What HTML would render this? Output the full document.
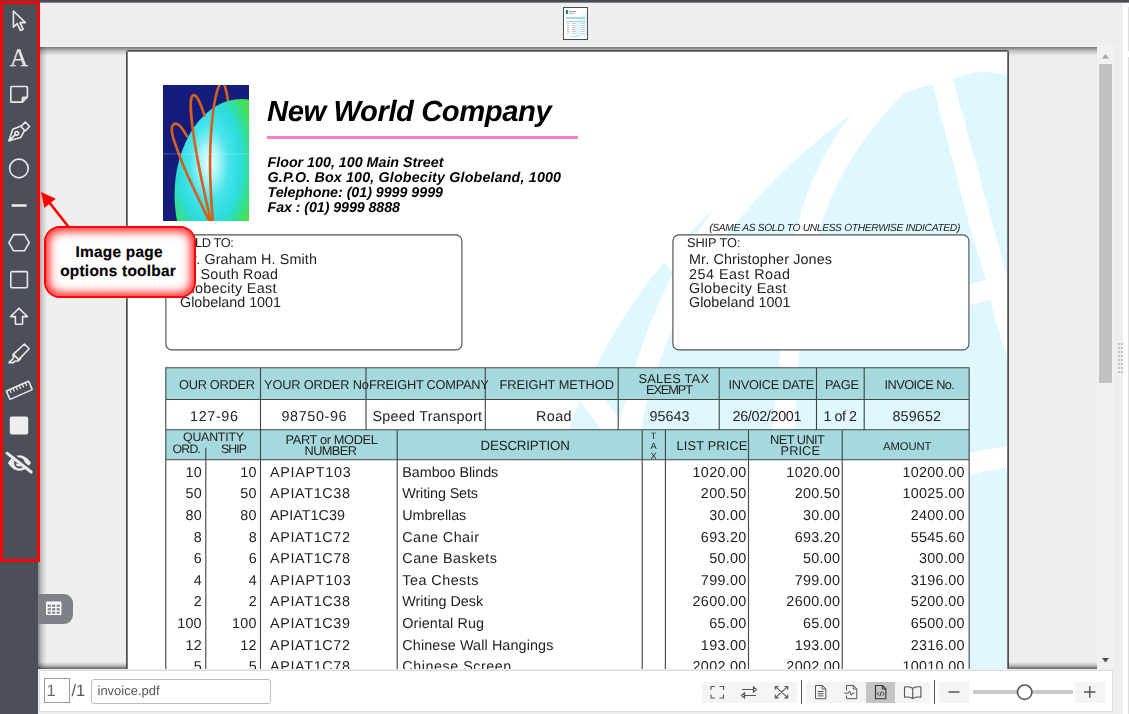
<!DOCTYPE html>
<html lang="en">
<head>
<meta charset="utf-8">
<title>Image page options toolbar</title>
<style>
html,body{margin:0;padding:0}
body{text-rendering:geometricPrecision;width:1129px;height:714px;overflow:hidden;position:relative;background:#eeeeee;font-family:"Liberation Sans",Arial,sans-serif}
.abs,.r,.t{position:absolute}
.t{white-space:nowrap}
#topstrip{left:0;top:0;width:1129px;height:3px;background:linear-gradient(#454a51 0,#4a4f57 60%,#a9abae 100%)}
#sidebar{left:0;top:0;width:38px;height:714px;background:#4b5058}
#redbox{left:0;top:1px;width:34px;height:555px;border:3px solid #ff0000}
#viewer{will-change:transform;left:38px;top:47px;width:1059px;height:622px;background:#eeeeee;overflow:hidden}
#pgsheet{left:88px;top:3px;width:881px;height:700px;border:1px solid #505050;border-radius:1.5px;box-shadow:inset 0 0 0 1px #7c7c7c;background:#fff}
#shTop{left:0;top:0;width:100%;height:9px;background:linear-gradient(rgba(0,0,0,.50),rgba(0,0,0,.18) 45%,rgba(0,0,0,0))}
#shLeft{left:0;top:0;width:9px;height:100%;background:linear-gradient(90deg,rgba(0,0,0,.42),rgba(0,0,0,.15) 45%,rgba(0,0,0,0))}
#shBot{left:0;bottom:0;width:100%;height:7px;background:linear-gradient(0deg,rgba(0,0,0,.60),rgba(0,0,0,.2) 50%,rgba(0,0,0,0))}
#vscroll{left:1097px;top:47px;width:17px;height:622px;background:#f1f1f1}
#vthumb{left:2px;top:17px;width:13px;height:319px;background:#c1c1c1}
#rwhite{left:1123px;top:3px;width:6px;height:711px;background:#fff}
#bbar{left:39px;top:670px;width:1072px;height:40px;background:#fff;border:1px solid #dcdcdc}
#tab{left:38px;top:594px;width:35px;height:30px;background:#7d8288;border-radius:0 9px 9px 0}
.ui{font-family:"Liberation Sans",Arial,sans-serif;color:#666}
</style>
</head>
<body>
<div id="viewer" class="abs">
<div id="shTop" class="abs"></div><div id="shLeft" class="abs"></div><div id="shBot" class="abs"></div>
<div id="pgsheet" class="abs"></div>
<div class="abs" style="left:-38px;top:-47px;width:1129px;height:714px"><svg class="abs" style="left:0;top:0" width="1129" height="714" viewBox="0 0 1129 714"><defs><clipPath id="pgclip"><rect x="128" y="52" width="879" height="640"/></clipPath></defs><g clip-path="url(#pgclip)"><path d="M541.2 700.0 C540.6 695.0 538.6 680.0 537.7 670.0 C536.8 660.0 536.2 650.0 535.9 640.0 C535.5 630.0 535.4 620.0 535.6 610.0 C535.8 600.0 536.2 590.0 536.9 580.0 C537.6 570.0 538.6 560.0 539.9 550.0 C541.1 540.0 542.7 530.0 544.5 520.0 C546.3 510.0 548.3 500.0 550.7 490.0 C553.1 480.0 555.8 470.0 558.7 460.0 C561.7 450.0 565.0 440.0 568.6 430.0 C572.2 420.0 576.0 410.0 580.3 400.0 C584.6 390.0 589.1 380.0 594.1 370.0 C599.1 360.0 604.4 350.0 610.1 340.0 C615.9 330.0 622.0 320.0 628.6 310.0 C635.3 300.0 642.3 290.0 649.9 280.0 C657.5 270.0 665.5 260.0 674.3 250.0 C683.1 240.0 692.3 230.0 702.5 220.0 C712.7 210.0 723.4 200.0 735.4 190.0 C747.3 180.0 759.9 170.0 774.3 160.0 C788.7 150.0 808.6 137.7 821.8 130.0 C834.9 122.3 839.0 120.2 853.0 114.0 C867.0 107.8 892.7 97.6 906.0 92.6 C919.3 87.6 925.2 86.3 933.0 84.0 C940.8 81.7 945.8 80.4 953.0 78.5 C960.2 76.6 969.5 73.6 976.0 72.6 C982.5 71.6 986.0 71.8 992.0 72.5 C998.0 73.2 1008.7 76.2 1012.0 77.0 L1012 720 L540 720 Z" fill="#dff7fe"/><g fill="#fff"><path d="M853.9 112.0 C849.6 115.3 836.3 125.3 828.1 132.0 C819.8 138.7 811.9 145.3 804.4 152.0 C796.8 158.7 789.6 165.3 782.7 172.0 C775.9 178.7 769.3 185.3 763.0 192.0 C756.8 198.7 750.8 205.3 745.2 212.0 C739.5 218.7 734.1 225.3 729.0 232.0 C723.9 238.7 719.1 245.3 714.5 252.0 C709.9 258.7 705.6 265.3 701.5 272.0 C697.4 278.7 693.6 285.3 690.0 292.0 C686.3 298.7 682.9 305.3 679.7 312.0 C676.5 318.7 673.5 325.3 670.7 332.0 C667.8 338.7 665.2 345.3 662.7 352.0 C660.3 358.7 658.0 365.3 655.8 372.0 C653.7 378.7 651.7 385.3 649.8 392.0 C647.9 398.7 646.2 405.3 644.6 412.0 C643.0 418.7 641.1 427.3 640.1 432.0 C639.0 436.7 638.7 438.7 638.4 440.0 L615.5 440.0 C615.5 439.9 614.7 443.1 615.6 439.7 C616.4 436.3 618.8 426.4 620.5 419.7 C622.2 413.0 623.9 406.4 625.7 399.7 C627.5 393.0 629.4 386.4 631.3 379.7 C633.3 373.0 635.3 366.4 637.5 359.7 C639.6 353.0 641.9 346.4 644.3 339.7 C646.6 333.0 649.1 326.4 651.8 319.7 C654.5 313.0 657.3 306.4 660.3 299.7 C663.3 293.0 666.5 286.4 669.9 279.7 C673.3 273.0 676.9 266.4 680.7 259.7 C684.5 253.0 688.5 246.4 692.7 239.7 C697.0 233.0 701.5 226.4 706.3 219.7 C711.1 213.0 718.9 203.0 721.4 199.7 L780 120 Z"/><path d="M852.9 112.0 C850.5 115.3 843.0 125.3 838.6 132.0 C834.2 138.7 830.2 145.3 826.4 152.0 C822.7 158.7 819.4 165.3 816.3 172.0 C813.2 178.7 810.4 185.3 807.9 192.0 C805.4 198.7 803.1 205.3 801.1 212.0 C799.0 218.7 797.3 225.3 795.6 232.0 C794.0 238.7 792.6 245.3 791.3 252.0 C790.0 258.7 789.0 265.3 788.0 272.0 C787.0 278.7 786.1 285.3 785.4 292.0 C784.6 298.7 783.9 305.3 783.3 312.0 C782.7 318.7 782.2 325.3 781.6 332.0 C781.1 338.7 780.6 345.3 780.0 352.0 C779.5 358.7 779.0 365.3 778.4 372.0 C777.8 378.7 777.2 385.3 776.5 392.0 C775.8 398.7 775.1 405.3 774.2 412.0 C773.3 418.7 771.9 427.3 771.2 432.0 C770.4 436.7 770.0 438.7 769.7 440.0 L793.6 440.0 C793.7 438.7 793.9 436.7 794.3 432.0 C794.7 427.3 795.3 418.7 795.8 412.0 C796.2 405.3 796.6 398.7 797.0 392.0 C797.4 385.3 797.7 378.7 798.1 372.0 C798.5 365.3 798.9 358.7 799.3 352.0 C799.8 345.3 800.2 338.7 800.8 332.0 C801.4 325.3 802.0 318.7 802.8 312.0 C803.5 305.3 804.3 298.7 805.3 292.0 C806.3 285.3 807.4 278.7 808.7 272.0 C810.0 265.3 811.4 258.7 813.0 252.0 C814.7 245.3 816.5 238.7 818.6 232.0 C820.6 225.3 822.9 218.7 825.4 212.0 C828.0 205.3 830.8 198.7 833.8 192.0 C836.9 185.3 840.3 178.7 844.0 172.0 C847.6 165.3 851.6 158.7 855.9 152.0 C860.3 145.3 864.9 138.7 870.0 132.0 C875.1 125.3 880.5 118.7 886.3 112.0 C892.2 105.3 901.9 95.3 905.0 92.0 L880 90 Z"/><path d="M930.5 76.0 C930.9 77.4 929.0 70.2 932.8 84.5 C936.5 98.8 946.3 136.4 953.0 162.0 C959.7 187.6 967.5 218.3 973.0 238.0 C978.5 257.7 982.3 267.1 986.0 280.4 C989.7 293.7 991.5 305.5 995.0 318.0 C998.5 330.5 1001.2 338.5 1007.0 355.5 C1012.8 372.5 1026.2 409.2 1030.0 420.0 L1030 340 C1026.2 329.2 1012.5 291.7 1007.0 275.0 C1001.5 258.3 1002.3 259.2 997.0 240.0 C991.7 220.8 982.3 186.8 975.0 160.0 C967.7 133.2 957.0 93.8 953.0 79.0 C949.0 64.2 951.3 72.3 951.0 71.0 Z"/></g><g fill="none" stroke="#fff"><path d="M659.0 240.0 C662.0 243.7 669.2 252.7 677.0 262.0 C684.8 271.3 692.2 285.3 706.0 296.0 C719.8 306.7 737.7 319.7 760.0 326.0 C782.3 332.3 813.3 336.0 840.0 334.0 C866.7 332.0 898.3 320.6 920.0 314.0 C941.7 307.4 956.7 298.8 970.0 294.5 C983.3 290.2 991.7 289.9 1000.0 288.0 C1008.3 286.1 1016.7 283.8 1020.0 283.0" stroke-width="20"/><path d="M577.0 380.0 C580.3 384.3 589.8 397.0 597.0 406.0 C604.2 415.0 606.2 421.7 620.0 434.0 C633.8 446.3 653.3 468.2 680.0 480.0 C706.7 491.8 746.7 503.0 780.0 505.0 C813.3 507.0 848.3 498.8 880.0 492.0 C911.7 485.2 948.8 469.8 970.0 464.0 C991.2 458.2 997.8 458.8 1007.0 457.0 C1016.2 455.2 1022.0 453.7 1025.0 453.0" stroke-width="21"/></g></g></svg>
<svg class="abs" style="left:163px;top:85.4px" width="86.4" height="136" viewBox="0 0 86 136" preserveAspectRatio="none"><defs><radialGradient id="lg" gradientUnits="userSpaceOnUse" cx="46" cy="78" r="46" gradientTransform="translate(46 78) scale(1 1.9) translate(-46 -78)"><stop offset="0" stop-color="#ecffff"/><stop offset="0.2" stop-color="#a8f4f8"/><stop offset="0.42" stop-color="#48e4ec"/><stop offset="0.68" stop-color="#2cdcdc"/><stop offset="0.86" stop-color="#30e098"/><stop offset="1" stop-color="#44e054"/></radialGradient><filter id="lb" x="-5%" y="-5%" width="110%" height="110%"><feGaussianBlur stdDeviation="0.45"/></filter><clipPath id="lc"><rect x="0" y="0" width="86" height="136"/></clipPath></defs>
<g clip-path="url(#lc)"><rect width="86" height="136" fill="#151c7c"/><g filter="url(#lb)"><ellipse cx="78" cy="110" rx="66.5" ry="96" fill="url(#lg)"/>
<g fill="none" stroke="#d5611d" stroke-width="2.6" stroke-linecap="round"><path d="M46 136 C38 118 24 92 17 72 C11 56 7 46 9.4 41 C11.5 36.6 15.5 39 18.4 42.6 C20.6 45.4 22.4 48.6 24 51.4"/><path d="M47.6 136 C42 112 34 76 30.4 50 C28 32 25.6 14 29.6 10.6 C33 8 37 17.5 41.4 30.6"/><path d="M49.6 136 C47.6 112 45.6 80 47.6 52 C49 30 52 8 56.6 -1 M61 -1 C62.6 4 63.6 9 64.6 15"/></g>
<path d="M0 68.9 H86" stroke="#cfe" stroke-opacity=".55" stroke-width="0.5"/></g></g></svg>

<div class="t" style="left:267.00px;top:95px;font-size:29.21px;line-height:34px;font-weight:bold;font-style:italic;color:#000;letter-spacing:-0.427px;">New World Company</div>
<div class="r" style="left:267px;top:136px;width:311px;height:3px;background:#ff80c0"></div>
<div class="t" style="left:267.50px;top:155px;font-size:14.25px;line-height:17px;font-weight:bold;font-style:italic;color:#000;letter-spacing:0.006px;">Floor 100, 100 Main Street</div>
<div class="t" style="left:267.50px;top:170px;font-size:14.25px;line-height:17px;font-weight:bold;font-style:italic;color:#000;letter-spacing:0.177px;">G.P.O. Box 100, Globecity Globeland, 1000</div>
<div class="t" style="left:267.50px;top:185px;font-size:14.25px;line-height:17px;font-weight:bold;font-style:italic;color:#000;letter-spacing:-0.026px;">Telephone: (01) 9999 9999</div>
<div class="t" style="left:267.50px;top:200px;font-size:14.25px;line-height:17px;font-weight:bold;font-style:italic;color:#000;letter-spacing:-0.073px;">Fax : (01) 9999 8888</div>
<div class="t" style="left:709.30px;top:222px;font-size:10.25px;line-height:13px;font-weight:normal;font-style:italic;color:#222;letter-spacing:-0.339px;">(SAME AS SOLD TO UNLESS OTHERWISE INDICATED)</div>
<svg class="abs" style="left:0;top:0" width="1129" height="714" viewBox="0 0 1129 714"><rect x="165.9" y="234.9" width="296" height="115" rx="6" fill="#fff" stroke="#4d5353" stroke-width="1.15"/><rect x="672.9" y="234.9" width="296" height="115" rx="6" fill="#fff" stroke="#4d5353" stroke-width="1.15"/><rect x="165.8" y="367.8" width="803.3499999999999" height="31.69999999999999" fill="#a6d9dd"/><rect x="165.8" y="429.8" width="803.3499999999999" height="30.0" fill="#a6d9dd"/><rect x="165.8" y="459.8" width="803.3499999999999" height="215" fill="#fff"/><path d="M165.20000000000002 367.8 H969.75 M165.20000000000002 399.5 H969.75 M165.20000000000002 429.8 H969.75 M165.20000000000002 459.8 H969.75 M165.8 367.8 V429.8 M260.5 367.8 V429.8 M366.0 367.8 V429.8 M485.3 367.8 V429.8 M618.2 367.8 V429.8 M719.2 367.8 V429.8 M816.5 367.8 V429.8 M864.2 367.8 V429.8 M969.15 367.8 V429.8 M165.8 429.8 V680 M260.5 429.8 V680 M397.2 429.8 V680 M642.2 429.8 V680 M665.4 429.8 V680 M748.5 429.8 V680 M842.2 429.8 V680 M969.15 429.8 V680 M205.8 447.8 V680" fill="none" stroke="#414747" stroke-width="1.12"/></svg>
<div class="t" style="left:177.30px;top:235px;font-size:12.81px;line-height:16px;font-weight:normal;font-style:normal;color:#222;letter-spacing:-0.401px;">SOLD TO:</div>
<div class="t" style="left:180.00px;top:251px;font-size:14.35px;line-height:18px;font-weight:normal;font-style:normal;color:#222;letter-spacing:0.125px;">Mr. Graham H. Smith</div>
<div class="t" style="left:180.00px;top:266px;font-size:14.35px;line-height:18px;font-weight:normal;font-style:normal;color:#222;letter-spacing:0.190px;">10 South Road</div>
<div class="t" style="left:180.00px;top:280px;font-size:14.35px;line-height:18px;font-weight:normal;font-style:normal;color:#222;letter-spacing:0.309px;">Globecity East</div>
<div class="t" style="left:180.00px;top:294px;font-size:14.35px;line-height:18px;font-weight:normal;font-style:normal;color:#222;letter-spacing:-0.024px;">Globeland 1001</div>
<div class="t" style="left:687.00px;top:235px;font-size:12.81px;line-height:16px;font-weight:normal;font-style:normal;color:#222;letter-spacing:-0.089px;">SHIP TO:</div>
<div class="t" style="left:689.00px;top:251px;font-size:14.35px;line-height:18px;font-weight:normal;font-style:normal;color:#222;letter-spacing:0.133px;">Mr. Christopher Jones</div>
<div class="t" style="left:689.00px;top:266px;font-size:14.35px;line-height:18px;font-weight:normal;font-style:normal;color:#222;letter-spacing:0.506px;">254 East Road</div>
<div class="t" style="left:689.00px;top:280px;font-size:14.35px;line-height:18px;font-weight:normal;font-style:normal;color:#222;letter-spacing:0.386px;">Globecity East</div>
<div class="t" style="left:689.00px;top:294px;font-size:14.35px;line-height:18px;font-weight:normal;font-style:normal;color:#222;letter-spacing:0.015px;">Globeland 1001</div>
<div class="t" style="left:179.00px;top:377px;font-size:12.81px;line-height:16px;font-weight:normal;font-style:normal;color:#222;letter-spacing:-0.284px;">OUR ORDER</div>
<div class="t" style="left:264.00px;top:377px;font-size:12.81px;line-height:16px;font-weight:normal;font-style:normal;color:#222;letter-spacing:-0.148px;">YOUR ORDER No</div>
<div class="t" style="left:369.00px;top:377px;font-size:12.81px;line-height:16px;font-weight:normal;font-style:normal;color:#222;letter-spacing:-0.240px;">FREIGHT COMPANY</div>
<div class="t" style="left:499.50px;top:377px;font-size:12.81px;line-height:16px;font-weight:normal;font-style:normal;color:#222;letter-spacing:-0.041px;">FREIGHT METHOD</div>
<div class="t" style="left:638.50px;top:371px;font-size:12.81px;line-height:16px;font-weight:normal;font-style:normal;color:#222;letter-spacing:0.238px;">SALES TAX</div>
<div class="t" style="left:646.00px;top:382px;font-size:12.81px;line-height:16px;font-weight:normal;font-style:normal;color:#222;letter-spacing:-1.130px;">EXEMPT</div>
<div class="t" style="left:728.50px;top:377px;font-size:12.81px;line-height:16px;font-weight:normal;font-style:normal;color:#222;letter-spacing:-0.316px;">INVOICE DATE</div>
<div class="t" style="left:825.00px;top:377px;font-size:12.81px;line-height:16px;font-weight:normal;font-style:normal;color:#222;letter-spacing:-0.217px;">PAGE</div>
<div class="t" style="left:884.50px;top:377px;font-size:12.81px;line-height:16px;font-weight:normal;font-style:normal;color:#222;letter-spacing:-0.566px;">INVOICE No.</div>
<div class="t" style="left:190.00px;top:408px;font-size:14.35px;line-height:18px;font-weight:normal;font-style:normal;color:#222;letter-spacing:0.660px;">127-96</div>
<div class="t" style="left:281.50px;top:408px;font-size:14.35px;line-height:18px;font-weight:normal;font-style:normal;color:#222;letter-spacing:0.624px;">98750-96</div>
<div class="t" style="left:372.50px;top:408px;font-size:14.35px;line-height:18px;font-weight:normal;font-style:normal;color:#222;letter-spacing:0.242px;">Speed Transport</div>
<div class="t" style="left:536.00px;top:408px;font-size:14.35px;line-height:18px;font-weight:normal;font-style:normal;color:#222;letter-spacing:0.401px;">Road</div>
<div class="t" style="left:649.50px;top:408px;font-size:14.35px;line-height:18px;font-weight:normal;font-style:normal;color:#222;letter-spacing:0.027px;">95643</div>
<div class="t" style="left:732.50px;top:408px;font-size:14.35px;line-height:18px;font-weight:normal;font-style:normal;color:#222;letter-spacing:-0.314px;">26/02/2001</div>
<div class="t" style="left:823.50px;top:408px;font-size:14.35px;line-height:18px;font-weight:normal;font-style:normal;color:#222;letter-spacing:-0.475px;">1 of 2</div>
<div class="t" style="left:892.50px;top:408px;font-size:14.35px;line-height:18px;font-weight:normal;font-style:normal;color:#222;letter-spacing:0.129px;">859652</div>
<div class="t" style="left:183.00px;top:430px;font-size:12.3px;line-height:15px;font-weight:normal;font-style:normal;color:#222;letter-spacing:-0.168px;">QUANTITY</div>
<div class="t" style="left:172.50px;top:442px;font-size:12.3px;line-height:15px;font-weight:normal;font-style:normal;color:#222;letter-spacing:-0.750px;">ORD.</div>
<div class="t" style="left:221.00px;top:442px;font-size:12.3px;line-height:15px;font-weight:normal;font-style:normal;color:#222;letter-spacing:-0.907px;">SHIP</div>
<div class="t" style="left:285.50px;top:432px;font-size:12.81px;line-height:16px;font-weight:normal;font-style:normal;color:#222;letter-spacing:-0.362px;">PART or MODEL</div>
<div class="t" style="left:304.50px;top:443px;font-size:12.81px;line-height:16px;font-weight:normal;font-style:normal;color:#222;letter-spacing:-0.606px;">NUMBER</div>
<div class="t" style="left:480.50px;top:438px;font-size:13.32px;line-height:16px;font-weight:normal;font-style:normal;color:#222;letter-spacing:-0.154px;">DESCRIPTION</div>
<div class="t" style="left:676.50px;top:438px;font-size:12.81px;line-height:16px;font-weight:normal;font-style:normal;color:#222;letter-spacing:0.160px;">LIST PRICE</div>
<div class="t" style="left:770.00px;top:432px;font-size:12.81px;line-height:16px;font-weight:normal;font-style:normal;color:#222;letter-spacing:-0.552px;">NET UNIT</div>
<div class="t" style="left:780.50px;top:443px;font-size:12.81px;line-height:16px;font-weight:normal;font-style:normal;color:#222;letter-spacing:0.091px;">PRICE</div>
<div class="t" style="left:883.00px;top:440px;font-size:11.27px;line-height:14px;font-weight:normal;font-style:normal;color:#222;letter-spacing:-0.071px;">AMOUNT</div>
<div class="t" style="left:650.75px;top:430px;font-size:9.22px;line-height:12px;font-weight:normal;font-style:normal;color:#222;letter-spacing:0.000px;">T</div>
<div class="t" style="left:650.50px;top:440px;font-size:9.22px;line-height:12px;font-weight:normal;font-style:normal;color:#222;letter-spacing:0.000px;">A</div>
<div class="t" style="left:650.50px;top:450px;font-size:9.22px;line-height:12px;font-weight:normal;font-style:normal;color:#222;letter-spacing:0.000px;">X</div>
<div class="t" style="left:185.54px;top:464px;font-size:14.35px;line-height:18px;font-weight:normal;font-style:normal;color:#222;letter-spacing:0.132px;">10</div>
<div class="t" style="left:240.34px;top:464px;font-size:14.35px;line-height:18px;font-weight:normal;font-style:normal;color:#222;letter-spacing:0.132px;">10</div>
<div class="t" style="left:270.00px;top:464px;font-size:14.35px;line-height:18px;font-weight:normal;font-style:normal;color:#222;letter-spacing:0.721px;">APIAPT103</div>
<div class="t" style="left:402.30px;top:464px;font-size:14.35px;line-height:18px;font-weight:normal;font-style:normal;color:#222;letter-spacing:-0.042px;">Bamboo Blinds</div>
<div class="t" style="left:692.57px;top:464px;font-size:14.35px;line-height:18px;font-weight:normal;font-style:normal;color:#222;letter-spacing:0.309px;">1020.00</div>
<div class="t" style="left:786.37px;top:464px;font-size:14.35px;line-height:18px;font-weight:normal;font-style:normal;color:#222;letter-spacing:0.309px;">1020.00</div>
<div class="t" style="left:902.48px;top:464px;font-size:14.35px;line-height:18px;font-weight:normal;font-style:normal;color:#222;letter-spacing:0.311px;">10200.00</div>
<div class="t" style="left:185.54px;top:485px;font-size:14.35px;line-height:18px;font-weight:normal;font-style:normal;color:#222;letter-spacing:0.132px;">50</div>
<div class="t" style="left:240.34px;top:485px;font-size:14.35px;line-height:18px;font-weight:normal;font-style:normal;color:#222;letter-spacing:0.132px;">50</div>
<div class="t" style="left:270.00px;top:485px;font-size:14.35px;line-height:18px;font-weight:normal;font-style:normal;color:#222;letter-spacing:0.664px;">APIAT1C38</div>
<div class="t" style="left:402.30px;top:485px;font-size:14.35px;line-height:18px;font-weight:normal;font-style:normal;color:#222;letter-spacing:-0.124px;">Writing Sets</div>
<div class="t" style="left:700.86px;top:485px;font-size:14.35px;line-height:18px;font-weight:normal;font-style:normal;color:#222;letter-spacing:0.306px;">200.50</div>
<div class="t" style="left:794.66px;top:485px;font-size:14.35px;line-height:18px;font-weight:normal;font-style:normal;color:#222;letter-spacing:0.306px;">200.50</div>
<div class="t" style="left:902.48px;top:485px;font-size:14.35px;line-height:18px;font-weight:normal;font-style:normal;color:#222;letter-spacing:0.311px;">10025.00</div>
<div class="t" style="left:185.54px;top:507px;font-size:14.35px;line-height:18px;font-weight:normal;font-style:normal;color:#222;letter-spacing:0.132px;">80</div>
<div class="t" style="left:240.34px;top:507px;font-size:14.35px;line-height:18px;font-weight:normal;font-style:normal;color:#222;letter-spacing:0.132px;">80</div>
<div class="t" style="left:270.00px;top:507px;font-size:14.35px;line-height:18px;font-weight:normal;font-style:normal;color:#222;letter-spacing:0.039px;">APIAT1C39</div>
<div class="t" style="left:402.30px;top:507px;font-size:14.35px;line-height:18px;font-weight:normal;font-style:normal;color:#222;letter-spacing:-0.072px;">Umbrellas</div>
<div class="t" style="left:709.15px;top:507px;font-size:14.35px;line-height:18px;font-weight:normal;font-style:normal;color:#222;letter-spacing:0.301px;">30.00</div>
<div class="t" style="left:802.95px;top:507px;font-size:14.35px;line-height:18px;font-weight:normal;font-style:normal;color:#222;letter-spacing:0.301px;">30.00</div>
<div class="t" style="left:910.77px;top:507px;font-size:14.35px;line-height:18px;font-weight:normal;font-style:normal;color:#222;letter-spacing:0.309px;">2400.00</div>
<div class="t" style="left:193.83px;top:529px;font-size:14.35px;line-height:18px;font-weight:normal;font-style:normal;color:#222;letter-spacing:-0.194px;">8</div>
<div class="t" style="left:248.63px;top:529px;font-size:14.35px;line-height:18px;font-weight:normal;font-style:normal;color:#222;letter-spacing:-0.194px;">8</div>
<div class="t" style="left:270.00px;top:529px;font-size:14.35px;line-height:18px;font-weight:normal;font-style:normal;color:#222;letter-spacing:0.664px;">APIAT1C72</div>
<div class="t" style="left:402.30px;top:529px;font-size:14.35px;line-height:18px;font-weight:normal;font-style:normal;color:#222;letter-spacing:0.454px;">Cane Chair</div>
<div class="t" style="left:700.86px;top:529px;font-size:14.35px;line-height:18px;font-weight:normal;font-style:normal;color:#222;letter-spacing:0.306px;">693.20</div>
<div class="t" style="left:794.66px;top:529px;font-size:14.35px;line-height:18px;font-weight:normal;font-style:normal;color:#222;letter-spacing:0.306px;">693.20</div>
<div class="t" style="left:910.77px;top:529px;font-size:14.35px;line-height:18px;font-weight:normal;font-style:normal;color:#222;letter-spacing:0.309px;">5545.60</div>
<div class="t" style="left:193.83px;top:550px;font-size:14.35px;line-height:18px;font-weight:normal;font-style:normal;color:#222;letter-spacing:-0.194px;">6</div>
<div class="t" style="left:248.63px;top:550px;font-size:14.35px;line-height:18px;font-weight:normal;font-style:normal;color:#222;letter-spacing:-0.194px;">6</div>
<div class="t" style="left:270.00px;top:550px;font-size:14.35px;line-height:18px;font-weight:normal;font-style:normal;color:#222;letter-spacing:0.664px;">APIAT1C78</div>
<div class="t" style="left:402.30px;top:550px;font-size:14.35px;line-height:18px;font-weight:normal;font-style:normal;color:#222;letter-spacing:0.488px;">Cane Baskets</div>
<div class="t" style="left:709.15px;top:550px;font-size:14.35px;line-height:18px;font-weight:normal;font-style:normal;color:#222;letter-spacing:0.301px;">50.00</div>
<div class="t" style="left:802.95px;top:550px;font-size:14.35px;line-height:18px;font-weight:normal;font-style:normal;color:#222;letter-spacing:0.301px;">50.00</div>
<div class="t" style="left:919.06px;top:550px;font-size:14.35px;line-height:18px;font-weight:normal;font-style:normal;color:#222;letter-spacing:0.306px;">300.00</div>
<div class="t" style="left:193.83px;top:572px;font-size:14.35px;line-height:18px;font-weight:normal;font-style:normal;color:#222;letter-spacing:-0.194px;">4</div>
<div class="t" style="left:248.63px;top:572px;font-size:14.35px;line-height:18px;font-weight:normal;font-style:normal;color:#222;letter-spacing:-0.194px;">4</div>
<div class="t" style="left:270.00px;top:572px;font-size:14.35px;line-height:18px;font-weight:normal;font-style:normal;color:#222;letter-spacing:0.721px;">APIAPT103</div>
<div class="t" style="left:402.30px;top:572px;font-size:14.35px;line-height:18px;font-weight:normal;font-style:normal;color:#222;letter-spacing:0.486px;">Tea Chests</div>
<div class="t" style="left:700.86px;top:572px;font-size:14.35px;line-height:18px;font-weight:normal;font-style:normal;color:#222;letter-spacing:0.306px;">799.00</div>
<div class="t" style="left:794.66px;top:572px;font-size:14.35px;line-height:18px;font-weight:normal;font-style:normal;color:#222;letter-spacing:0.306px;">799.00</div>
<div class="t" style="left:910.77px;top:572px;font-size:14.35px;line-height:18px;font-weight:normal;font-style:normal;color:#222;letter-spacing:0.309px;">3196.00</div>
<div class="t" style="left:193.83px;top:593px;font-size:14.35px;line-height:18px;font-weight:normal;font-style:normal;color:#222;letter-spacing:-0.194px;">2</div>
<div class="t" style="left:248.63px;top:593px;font-size:14.35px;line-height:18px;font-weight:normal;font-style:normal;color:#222;letter-spacing:-0.194px;">2</div>
<div class="t" style="left:270.00px;top:593px;font-size:14.35px;line-height:18px;font-weight:normal;font-style:normal;color:#222;letter-spacing:0.664px;">APIAT1C38</div>
<div class="t" style="left:402.30px;top:593px;font-size:14.35px;line-height:18px;font-weight:normal;font-style:normal;color:#222;letter-spacing:-0.023px;">Writing Desk</div>
<div class="t" style="left:692.57px;top:593px;font-size:14.35px;line-height:18px;font-weight:normal;font-style:normal;color:#222;letter-spacing:0.309px;">2600.00</div>
<div class="t" style="left:786.37px;top:593px;font-size:14.35px;line-height:18px;font-weight:normal;font-style:normal;color:#222;letter-spacing:0.309px;">2600.00</div>
<div class="t" style="left:910.77px;top:593px;font-size:14.35px;line-height:18px;font-weight:normal;font-style:normal;color:#222;letter-spacing:0.309px;">5200.00</div>
<div class="t" style="left:177.18px;top:615px;font-size:14.35px;line-height:18px;font-weight:normal;font-style:normal;color:#222;letter-spacing:0.228px;">100</div>
<div class="t" style="left:231.98px;top:615px;font-size:14.35px;line-height:18px;font-weight:normal;font-style:normal;color:#222;letter-spacing:0.228px;">100</div>
<div class="t" style="left:270.00px;top:615px;font-size:14.35px;line-height:18px;font-weight:normal;font-style:normal;color:#222;letter-spacing:0.664px;">APIAT1C39</div>
<div class="t" style="left:402.30px;top:615px;font-size:14.35px;line-height:18px;font-weight:normal;font-style:normal;color:#222;letter-spacing:0.111px;">Oriental Rug</div>
<div class="t" style="left:709.15px;top:615px;font-size:14.35px;line-height:18px;font-weight:normal;font-style:normal;color:#222;letter-spacing:0.301px;">65.00</div>
<div class="t" style="left:802.95px;top:615px;font-size:14.35px;line-height:18px;font-weight:normal;font-style:normal;color:#222;letter-spacing:0.301px;">65.00</div>
<div class="t" style="left:910.77px;top:615px;font-size:14.35px;line-height:18px;font-weight:normal;font-style:normal;color:#222;letter-spacing:0.309px;">6500.00</div>
<div class="t" style="left:185.54px;top:637px;font-size:14.35px;line-height:18px;font-weight:normal;font-style:normal;color:#222;letter-spacing:0.132px;">12</div>
<div class="t" style="left:240.34px;top:637px;font-size:14.35px;line-height:18px;font-weight:normal;font-style:normal;color:#222;letter-spacing:0.132px;">12</div>
<div class="t" style="left:270.00px;top:637px;font-size:14.35px;line-height:18px;font-weight:normal;font-style:normal;color:#222;letter-spacing:0.664px;">APIAT1C72</div>
<div class="t" style="left:402.30px;top:637px;font-size:14.35px;line-height:18px;font-weight:normal;font-style:normal;color:#222;letter-spacing:0.125px;">Chinese Wall Hangings</div>
<div class="t" style="left:700.86px;top:637px;font-size:14.35px;line-height:18px;font-weight:normal;font-style:normal;color:#222;letter-spacing:0.306px;">193.00</div>
<div class="t" style="left:794.66px;top:637px;font-size:14.35px;line-height:18px;font-weight:normal;font-style:normal;color:#222;letter-spacing:0.306px;">193.00</div>
<div class="t" style="left:910.77px;top:637px;font-size:14.35px;line-height:18px;font-weight:normal;font-style:normal;color:#222;letter-spacing:0.309px;">2316.00</div>
<div class="t" style="left:193.83px;top:658px;font-size:14.35px;line-height:18px;font-weight:normal;font-style:normal;color:#222;letter-spacing:-0.194px;">5</div>
<div class="t" style="left:248.63px;top:658px;font-size:14.35px;line-height:18px;font-weight:normal;font-style:normal;color:#222;letter-spacing:-0.194px;">5</div>
<div class="t" style="left:270.00px;top:658px;font-size:14.35px;line-height:18px;font-weight:normal;font-style:normal;color:#222;letter-spacing:0.664px;">APIAT1C78</div>
<div class="t" style="left:402.30px;top:658px;font-size:14.35px;line-height:18px;font-weight:normal;font-style:normal;color:#222;letter-spacing:0.531px;">Chinese Screen</div>
<div class="t" style="left:692.57px;top:658px;font-size:14.35px;line-height:18px;font-weight:normal;font-style:normal;color:#222;letter-spacing:0.309px;">2002.00</div>
<div class="t" style="left:786.37px;top:658px;font-size:14.35px;line-height:18px;font-weight:normal;font-style:normal;color:#222;letter-spacing:0.309px;">2002.00</div>
<div class="t" style="left:902.48px;top:658px;font-size:14.35px;line-height:18px;font-weight:normal;font-style:normal;color:#222;letter-spacing:0.311px;">10010.00</div></div>
</div>
<div id="hl46" class="abs" style="left:38px;top:46px;width:1085px;height:1px;background:#f5f5f5"></div>
<div id="vscroll" class="abs"><div id="vthumb" class="abs"></div>
<svg class="abs" style="left:0;top:0" width="17" height="622"><path d="M5 11.5 L8.5 7 L12 11.5Z" fill="#a3a3a3"/><path d="M5 611 L8.5 615.5 L12 611Z" fill="#505050"/></svg></div>
<div id="rwhite" class="abs"></div>
<div id="bbar" class="abs"></div>
<div id="sidebar" class="abs"></div>
<div id="topstrip" class="abs"></div>
<div id="tab" class="abs"></div>
<div id="redbox" class="abs"></div>
<svg id="sideicons" class="abs" style="left:0;top:0" width="40" height="480" viewBox="0 0 40 480" fill="none" stroke="#e9e9e9" stroke-width="1.6" stroke-linejoin="round" stroke-linecap="round">
<!-- 1 mouse pointer -->
<path d="M13.4 11 L13.4 27.2 L17.2 23.6 L20.4 30.4 L23.1 29.2 L20 22.6 L25.4 22.6 Z"/>
<!-- 2 text A -->
<text x="19" y="66.4" text-anchor="middle" font-family="'Liberation Serif',serif" font-size="25.5" fill="#e4e4e4" stroke="#e4e4e4" stroke-width="0.3">A</text>
<!-- 3 sticky note -->
<path d="M11.6 86.5 H26.6 Q27.4 86.5 27.4 87.3 V97.2 L22.4 102.1 H11.6 Q10.8 102.1 10.8 101.3 V87.3 Q10.8 86.5 11.6 86.5 Z M27.2 97.2 H23.2 Q22.4 97.2 22.4 98 V102"/>
<path d="M22.6 97.6 H26.6 L22.6 101.6 Z" fill="#d9d9d9" stroke="none"/>
<!-- 4 pen nib -->
<path d="M25.3 122 L29.6 126.5 L25.3 131 L20.9 126.5 Z" stroke-linejoin="round"/><path d="M21.6 125.8 L12.8 129.2 L9 140.8 L20.8 137.4 L24.6 130.2"/><path d="M9.2 140.6 L15.4 134.6"/><circle cx="16.8" cy="133.3" r="1.8"/>
<!-- 5 circle -->
<circle cx="18.9" cy="168.4" r="9.3"/>
<!-- 6 line -->
<path d="M11.6 205.5 H26.6" stroke-width="2.6" stroke-linecap="butt"/>
<!-- 7 hexagon -->
<path d="M8.9 242.7 L13.6 234.6 H24.4 L29.2 242.7 L24.4 250.8 H13.6 Z"/>
<!-- 8 square -->
<rect x="10.8" y="271.6" width="16.6" height="16.2" rx="1.2"/>
<!-- 9 arrow up -->
<path d="M19 308.2 L27.4 316.6 H22.6 V323.6 Q22.6 324.3 21.9 324.3 H16.1 Q15.4 324.3 15.4 323.6 V316.6 H10.6 Z"/>
<!-- 10 highlighter -->
<g><path d="M24.4 344 L29.2 348.8 L18.6 359.6 L13.4 354.4 Z M15.2 352.2 L13 354.6 L13.4 358 L11.6 360.2 L9 362.6 L13.4 362.6 L15 361 L18.4 361 L20.6 358.6"/></g>
<!-- 11 ruler -->
<g transform="translate(19.3 390.3) rotate(-24)"><rect x="-12.2" y="-4.6" width="24.4" height="9.2" rx="0.8"/><path d="M-8.4 -4.4 V-1.4 M-5 -4.4 V-1.4 M-1.6 -4.4 V-1.4 M1.8 -4.4 V-1.4 M5.2 -4.4 V-1.4 M8.6 -4.4 V-1.4" stroke-width="1.3"/></g>
<!-- 12 filled square -->
<rect x="9.8" y="416.6" width="18.4" height="18" rx="2" fill="#eeeeee" stroke="none"/>
<!-- 13 eye slash -->
<g stroke="none" fill="#ececec"><path d="M7.8 463 Q13 455.2 19.4 455.2 Q26 455.2 31 463 Q26 470.8 19.4 470.8 Q13 470.8 7.8 463 Z M19.4 457.6 A5.4 5.4 0 1 0 19.5 468.4 A5.4 5.4 0 1 0 19.4 457.6 Z" fill-rule="evenodd"/><path d="M19.4 459.4 A3.6 3.6 0 1 1 15.8 463 A2.1 2.1 0 0 0 19.4 459.4Z"/></g>
<path d="M9.6 452 L33 470.4" stroke="#4b5058" stroke-width="2.4" stroke-linecap="butt"/>
<path d="M7 453.2 L31.2 472" stroke="#ececec" stroke-width="2.9"/>
</svg>
<!-- callout -->
<svg class="abs" style="left:36px;top:186px" width="40" height="46" viewBox="36 186 40 46"><path d="M49.6 202.8 L69.4 228" stroke="#ff0000" stroke-width="2.6" fill="none"/><path d="M41 192 L55.8 198.8 L44.4 208 Z" fill="#ff0000"/></svg>
<div id="callout" class="abs" style="left:43.8px;top:226.4px;width:148.4px;height:68px;border:2px solid #ff0000;border-radius:16px;background:#fff;box-shadow:inset 0 0 9px 3px rgba(255,0,0,.8),inset 0 0 14px 2px rgba(255,0,0,.22)"></div>
<div class="t" style="left:75.6px;top:243.96px;font-size:15.4px;line-height:18px;font-weight:bold;color:#000;letter-spacing:0.25px;-webkit-text-stroke:0.2px #000">Image page</div>
<div class="t" style="left:60.2px;top:262.66px;font-size:15.4px;line-height:18px;font-weight:bold;color:#000;letter-spacing:0.25px;-webkit-text-stroke:0.2px #000">options toolbar</div>
<!-- bottom toolbar -->
<div class="abs" style="left:44px;top:678px;width:24px;height:23px;border:1px solid #9a9a9a;background:#fff"></div>
<div class="t ui" style="left:46.5px;top:680.5px;font-size:16.5px;line-height:20px;color:#6b6b6b">1</div>
<div class="t ui" style="left:71.5px;top:680.5px;font-size:16.5px;line-height:20px;color:#555">/1</div>
<div class="abs" style="left:91px;top:678.5px;width:178px;height:23px;border:1px solid #bdbdbd;border-radius:3px;background:#fff"></div>
<div class="t ui" style="left:97.5px;top:682.5px;font-size:13px;line-height:16px;color:#555">invoice.pdf</div>
<div class="abs" style="left:702px;top:682px;width:95px;height:21px;background:#f4f4f4"></div>
<div class="abs" style="left:806px;top:682px;width:124px;height:21px;background:#f4f4f4"></div>
<div class="abs" style="left:866px;top:682px;width:29px;height:21px;background:#c4c4c4"></div>
<div class="abs" style="left:939px;top:682px;width:30px;height:21px;background:#f4f4f4"></div>
<div class="abs" style="left:1075px;top:682px;width:30px;height:21px;background:#f4f4f4"></div>
<div class="abs" style="left:801px;top:680px;width:1px;height:24px;background:#555"></div>
<div class="abs" style="left:934px;top:680px;width:1px;height:24px;background:#555"></div>
<div class="abs" style="left:973px;top:690px;width:100px;height:4px;background:#c9c9c9"></div>
<svg class="abs" style="left:700px;top:676px" width="420" height="34" viewBox="700 676 420 34" fill="none" stroke="#555" stroke-width="1.1">
<!-- fullscreen brackets -->
<path d="M711 690 V686.5 H715 M719.5 686.5 H723.5 V690 M723.5 694.5 V698 H719.5 M715 698 H711 V694.5"/>
<!-- swap arrows -->
<path d="M742 689.5 H754 M753.5 687 L756.5 689.5 L753.5 692 Z M756 695.5 H744 M744.5 693 L741.5 695.5 L744.5 698 Z"/>
<!-- expand -->
<path d="M776 687.2 L787 697.2 M787 687.2 L776 697.2 M775.3 689.8 V686.5 H778.6 M784.4 686.5 H787.7 V689.8 M787.7 694.6 V697.9 H784.4 M778.6 697.9 H775.3 V694.6"/>
<!-- doc -->
<path d="M815.5 685.5 H822.5 L825.8 688.8 V698.7 H815.5 Z M822.3 685.7 V689 H825.6 M817.8 691.5 H823.5 M817.8 693.7 H823.5 M817.8 695.9 H823.5" stroke-width="1"/>
<!-- doc pulse -->
<path d="M846.5 690.5 V685.5 H853.5 L856.8 688.8 V698.7 H846.5 V695.5 M853.3 685.7 V689 H856.6 M844.3 693.2 H848.3 L849.6 691 L851.2 695.2 L852.4 693.2 H854.6" stroke-width="1"/>
<!-- doc code -->
<path d="M875.5 685.5 H882.5 L885.8 688.8 V698.7 H875.5 Z M882.3 685.7 V689 H885.6" stroke="#333" stroke-width="1.1"/>
<path d="M878.8 692 L877.3 693.8 L878.8 695.6 M882.6 692 L884.1 693.8 L882.6 695.6 M881.4 691.4 L880 696.2" stroke="#333" stroke-width="0.9"/>
<!-- book -->
<path d="M912.7 688.2 Q908.6 686.2 904.5 687 V697.2 Q908.6 696.4 912.7 698.4 Q916.8 696.4 920.9 697.2 V687 Q916.8 686.2 912.7 688.2 V698.2"/>
<!-- minus / plus -->
<path d="M948.5 692 H959.5 M1084 692 H1095.5 M1089.75 686.2 V697.8" stroke-width="1.4"/>
<circle cx="1024.7" cy="692.2" r="7.2" fill="#fff" stroke="#555" stroke-width="1.6"/>
</svg>
<!-- tab icon -->
<svg class="abs" style="left:45px;top:600px" width="18" height="16" viewBox="45 600 18 16"><rect x="46" y="601.6" width="15.4" height="13.4" rx="1.2" fill="#fff"/><g fill="#7d8288"><rect x="47.6" y="604.6" width="3.2" height="2.2"/><rect x="52.1" y="604.6" width="3.2" height="2.2"/><rect x="56.6" y="604.6" width="3.2" height="2.2"/><rect x="47.6" y="608.2" width="3.2" height="2.2"/><rect x="52.1" y="608.2" width="3.2" height="2.2"/><rect x="56.6" y="608.2" width="3.2" height="2.2"/><rect x="47.6" y="611.6" width="3.2" height="2.2"/><rect x="52.1" y="611.6" width="3.2" height="2.2"/><rect x="56.6" y="611.6" width="3.2" height="2.2"/></g></svg>
<!-- thumbnail -->
<div class="abs" style="left:562.8px;top:7.3px;width:22.8px;height:30.6px;border:1.9px solid #474c53;background:#fff;overflow:hidden">
<div class="abs" style="left:2px;top:2px;width:2px;height:4px;background:#2a7f9a"></div>
<div class="abs" style="left:5px;top:2.5px;width:7px;height:1px;background:#999"></div>
<div class="abs" style="left:5px;top:5px;width:6px;height:1px;background:#bbb"></div>
<div class="abs" style="left:12px;top:2px;width:12px;height:26px;background:linear-gradient(135deg,rgba(223,247,254,0) 30%,#dff7fe 31%)"></div>
<div class="abs" style="left:2px;top:9px;width:19.6px;height:2px;background:#a6d9dd"></div>
<div class="abs" style="left:2px;top:12.5px;width:19.6px;height:1.4px;background:#a6d9dd"></div>
<div class="abs" style="left:3px;top:15px;width:2px;height:11px;background:repeating-linear-gradient(#bbb 0,#bbb 1px,#fff 1px,#fff 2px)"></div>
<div class="abs" style="left:8px;top:15px;width:4px;height:11px;background:repeating-linear-gradient(#ccc 0,#ccc 1px,#fff 1px,#fff 2px)"></div>
<div class="abs" style="left:17px;top:15px;width:4px;height:11px;background:repeating-linear-gradient(#ccc 0,#ccc 1px,#fff 1px,#fff 2px)"></div>
<div class="abs" style="left:6px;top:28px;width:10px;height:1px;background:#bfe6ea"></div>
</div>
<!-- grip -->
<div class="abs" style="left:1117.6px;top:343px;width:5px;height:30px;background:radial-gradient(circle at 1px 1px,#c6c6c6 0.9px,rgba(0,0,0,0) 1.1px) 0 0/3px 4px"></div>
<div class="abs" style="left:1128px;top:7px;width:1px;height:44px;background:#ddd"></div>
<div class="abs" style="left:1128px;top:57px;width:1px;height:657px;background:#ddd"></div>

</body>
</html>
